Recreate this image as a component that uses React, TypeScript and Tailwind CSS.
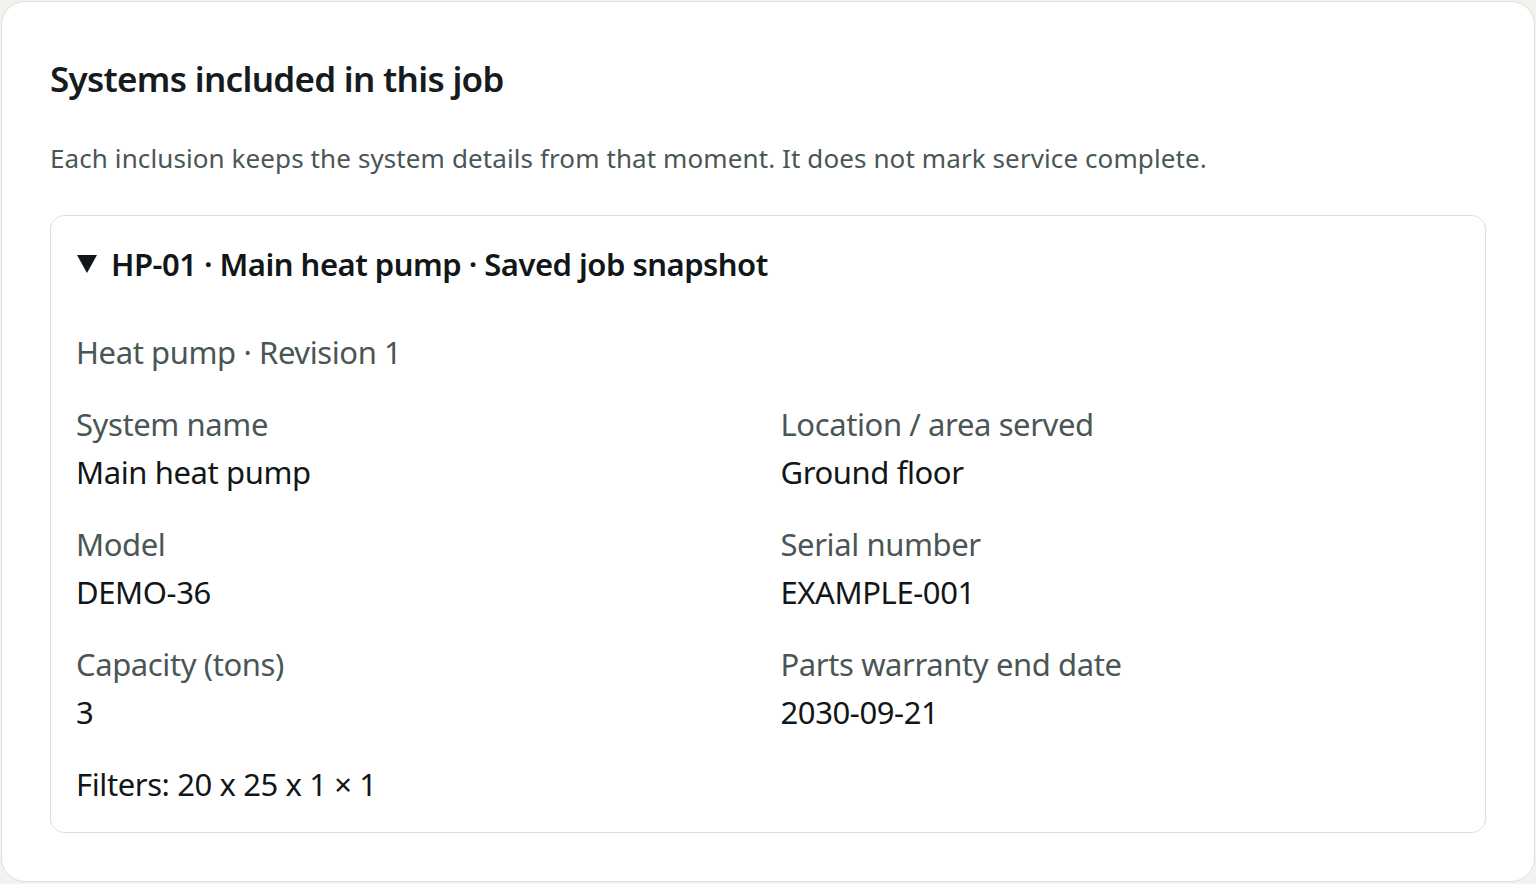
import React from "react";

const fields: { label: string; value: string }[] = [
  { label: "System name", value: "Main heat pump" },
  { label: "Location / area served", value: "Ground floor" },
  { label: "Model", value: "DEMO-36" },
  { label: "Serial number", value: "EXAMPLE-001" },
  { label: "Capacity (tons)", value: "3" },
  { label: "Parts warranty end date", value: "2030-09-21" },
];

export default function App() {
  return (
    <div
      className="min-h-screen bg-[#f3f2ee] p-px"
      style={{ fontFamily: '"Noto Sans", "Open Sans", sans-serif' }}
    >
      <section className="rounded-[24px] border border-[#dbe0de] bg-white p-12">
        <h2 className="pt-px text-[35px] font-semibold leading-[55px] tracking-[-0.7px] text-[#161b1d]">
          Systems included in this job
        </h2>
        <p className="mt-[31px] text-[26px] leading-[42px] tracking-[0.1px] text-[#4a5656]">
          Each inclusion keeps the system details from that moment. It does not mark service complete.
        </p>

        <div className="mt-[36px] rounded-[14px] border border-[#dbe0de] bg-white py-6 pl-[25px] pr-6">
          <div className="flex items-center text-[31px] font-semibold leading-[48px] tracking-[-0.5px] text-[#111618]">
            <svg width="20" height="18" viewBox="0 0 20 18" className="ml-px mr-[14px] shrink-0">
              <polygon points="0,0 20,0 10,18" fill="#111618" />
            </svg>
            <span>HP-01 · Main heat pump · Saved job snapshot</span>
          </div>

          <div className="mt-[40px] text-[31px] leading-[48px] tracking-[-0.4px]">
            <div className="text-[#4a5656]">Heat pump · Revision 1</div>

            <div className="mt-6 grid grid-cols-2 gap-x-6 gap-y-6">
              {fields.map((f) => (
                <div key={f.label}>
                  <div className="text-[#4a5656]">{f.label}</div>
                  <div className="text-[#111618]">{f.value}</div>
                </div>
              ))}
            </div>

            <div className="mt-6 text-[#111618]">Filters: 20 x 25 x 1 × 1</div>
          </div>
        </div>
      </section>
    </div>
  );
}
